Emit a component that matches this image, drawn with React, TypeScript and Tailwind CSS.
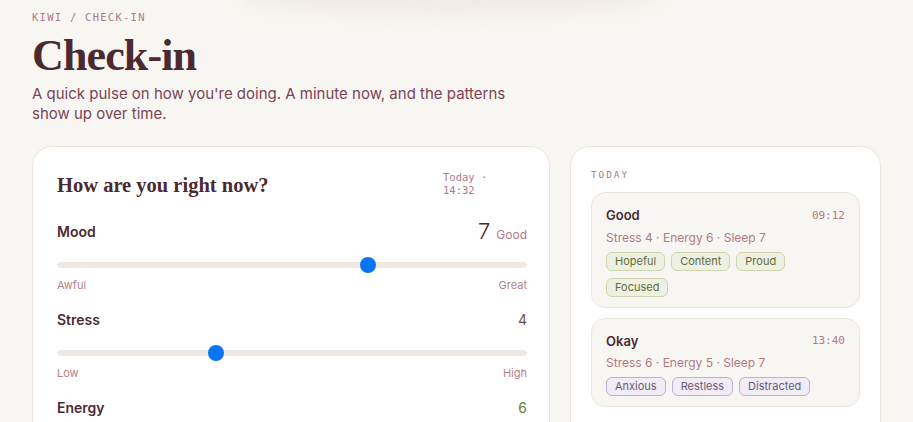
import React from "react";

type Scale = {
  label: string;
  value: number;
  word?: string;
  valueClass: string;
  low: string;
  high: string;
};

const scales: Scale[] = [
  { label: "Mood", value: 7, word: "Good", valueClass: "text-[22px] font-light text-[#4a2a30]", low: "Awful", high: "Great" },
  { label: "Stress", value: 4, valueClass: "text-[14px] text-[#7a4a55]", low: "Low", high: "High" },
  { label: "Energy", value: 6, valueClass: "text-[14px] text-[#6b7a3a]", low: "Drained", high: "Buzzing" },
];

type Entry = {
  title: string;
  time: string;
  stats: string;
  tags: string[];
  tone: "green" | "purple";
};

const entries: Entry[] = [
  { title: "Good", time: "09:12", stats: "Stress 4 · Energy 6 · Sleep 7", tags: ["Hopeful", "Content", "Proud", "Focused"], tone: "green" },
  { title: "Okay", time: "13:40", stats: "Stress 6 · Energy 5 · Sleep 7", tags: ["Anxious", "Restless", "Distracted"], tone: "purple" },
];

const mono = "font-['DejaVu_Sans_Mono','Liberation_Mono',monospace]";
const serif = "font-['Liberation_Serif','DejaVu_Serif',serif]";

function Slider({ value }: { value: number }) {
  // range 1..10, thumb 16px wide
  const frac = (value - 1) / 9;
  return (
    <div className="relative h-4 flex items-center">
      <div className="h-[6px] w-full rounded-full bg-[#efe9e3]" />
      <div
        className="absolute top-0 h-4 w-4 rounded-full bg-[#0a74f6]"
        style={{ left: `calc((100% - 16px) * ${frac})` }}
      />
    </div>
  );
}

export default function App() {
  return (
    <div className="relative min-h-screen overflow-hidden bg-[#f8f6f2] font-['Inter','Noto_Sans',sans-serif] text-[#4a2a30]">
      {/* soft glow at the top */}
      <div className="pointer-events-none absolute -top-[22px] left-[240px] h-[36px] w-[420px] rounded-[50%] bg-[#f0ebe7] blur-[8px]" />

      <div className="relative px-[32px] pt-[10px]">
        <div className={`${mono} text-[10.5px] tracking-[0.12em] text-[#b07a85]`}>KIWI / CHECK-IN</div>
        <h1 className={`${serif} mt-[4px] text-[44px] font-bold leading-[52px] tracking-[-0.02em] text-[#4a2a30]`}>
          Check-in
        </h1>
        <p className="mt-[2px] max-w-[500px] text-[15px] leading-[20px] text-[#7a4452]">
          A quick pulse on how you're doing. A minute now, and the patterns show up over time.
        </p>

        <div className="mt-[22px] flex gap-[20px]">
          <div className="w-[518px] shrink-0 rounded-[20px] border border-[#ece4dd] bg-white pl-[24px] pr-[22px] pt-[24px] pb-6">
            <div className="flex items-start justify-between">
              <h2 className={`${serif} pt-[2px] text-[20.5px] font-bold leading-[24px] text-[#4a2a30]`}>
                How are you right now?
              </h2>
              <div className={`${mono} w-[62px] mr-[22px] text-[10.5px] leading-[13px] text-[#b07a85]`}>Today · 14:32</div>
            </div>

            <div className="mt-[23px] flex flex-col gap-[16px]">
              {scales.map((s) => (
                <div key={s.label}>
                  <div className="flex h-[24px] items-center justify-between">
                    <span className="text-[14px] font-semibold text-[#4a2a30]">{s.label}</span>
                    <span className="flex items-baseline gap-[6px]">
                      <span className={s.valueClass}>{s.value}</span>
                      {s.word && <span className="text-[12px] text-[#b07a85]">{s.word}</span>}
                    </span>
                  </div>
                  <div className="mt-[13px]">
                    <Slider value={s.value} />
                  </div>
                  <div className="mt-[5px] flex justify-between text-[11px] leading-[14px] text-[#b5808a]">
                    <span>{s.low}</span>
                    <span>{s.high}</span>
                  </div>
                </div>
              ))}
            </div>
          </div>

          <div className="w-[311px] shrink-0 rounded-[20px] border border-[#ece4dd] bg-white px-[20px] pt-[21px] pb-[12px]">
            <div className={`${mono} text-[9.5px] tracking-[0.2em] text-[#b07a85]`}>TODAY</div>
            <div className="mt-[10px] flex flex-col gap-[10px]">
              {entries.map((e) => (
                <div key={e.time} className="rounded-[14px] border border-[#ece6df] bg-[#f8f6f3] px-[14px] pt-[13px] pb-[10px]">
                  <div className="flex items-center justify-between">
                    <span className="text-[13px] font-semibold text-[#4a2a30]">{e.title}</span>
                    <span className={`${mono} text-[11px] text-[#b07a85]`}>{e.time}</span>
                  </div>
                  <div className="mt-[3px] text-[12px] text-[#b07a85]">{e.stats}</div>
                  <div className="mt-[5px] flex flex-wrap gap-x-[6px] gap-y-[7px]">
                    {e.tags.map((t) => (
                      <span
                        key={t}
                        className={[
                          "rounded-[6px] border px-[8px] text-[11px] leading-[17px]",
                          e.tone === "green"
                            ? "border-[#cfd4ad] bg-[#eef0e3] text-[#5f6d3a]"
                            : "border-[#bfaed6] bg-[#f1ecf6] text-[#6a5a78]",
                        ].join(" ")}
                      >
                        {t}
                      </span>
                    ))}
                  </div>
                </div>
              ))}
            </div>
          </div>
        </div>
      </div>
    </div>
  );
}
